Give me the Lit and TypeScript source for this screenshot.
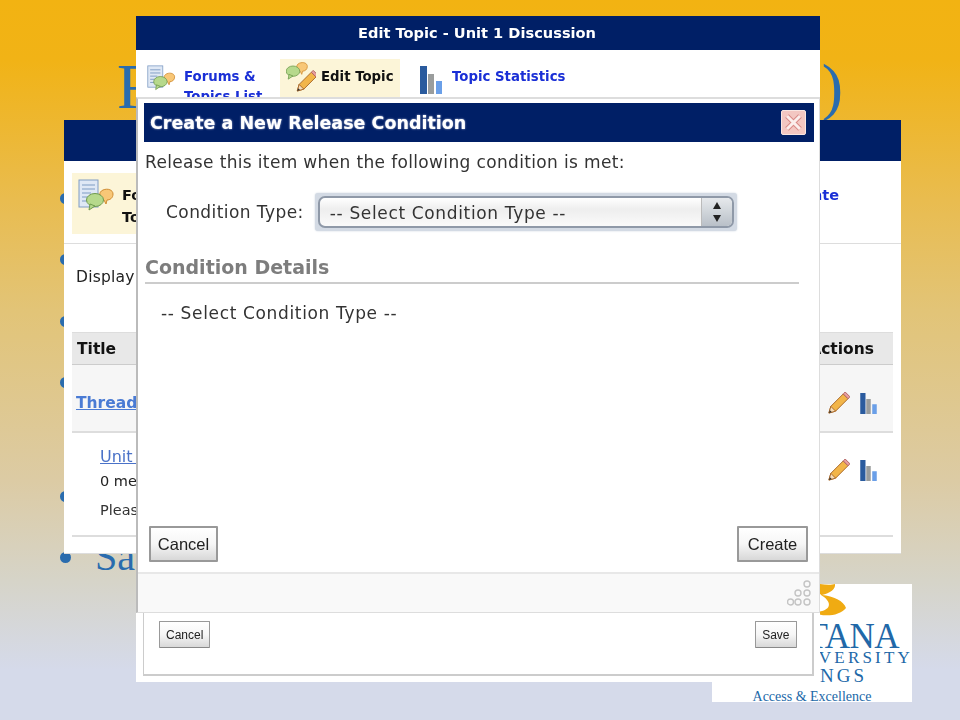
import { LitElement, html, css, svg } from "lit";
import { customElement } from "lit/decorators.js";

const listIcon = svg`<rect x="1" y="1" width="19" height="27" fill="#dfe8f5" stroke="#7f9cc4" stroke-width="1"/>
<path d="M4 6h13M4 10h13M4 14h9M4 18h7M4 22h6" stroke="#7f9cc4" stroke-width="1.2"/>`;
const bubbles = svg`<path d="M25 11c5-2 10 0 10 4s-3 6-6 6l-1 4-2-4c-5-1-6-8-1-10z" fill="#f8c777" stroke="#d08c32"/>
<ellipse cx="17" cy="21" rx="8.5" ry="6.5" fill="#b6d98c" stroke="#6f9a4d"/><path d="M12 25l-1 6 6-4z" fill="#b6d98c" stroke="#6f9a4d"/>`;
const pencil = svg`<path d="M3 22l2-7L18 2l5 5L10 20z" fill="#f2b549" stroke="#a8682a"/>
<path d="M18 2l2-2 5 5-2 2z" fill="#e8a0a0" stroke="#b06060"/><path d="M3 22l2-7 5 5z" fill="#f6dcb8" stroke="#a8682a"/><path d="M3 22l1-3 2 2z" fill="#333"/>`;

const listSvg = (w: number, h: number) => html`<svg class="ic" width=${w} height=${h} viewBox="0 0 38 34">${listIcon}${bubbles}</svg>`;
const editSvg = html`<svg class="ic" width="30" height="34" viewBox="0 0 32 34">
<g transform="translate(-7 -6) scale(.85)"><path d="M25 11c5-2 10 0 10 4s-3 6-6 6l-1 4-2-4c-5-1-6-8-1-10z" fill="#f8c777" stroke="#d08c32"/><ellipse cx="17" cy="21" rx="8.5" ry="6.5" fill="#b6d98c" stroke="#6f9a4d"/><path d="M12 25l-1 6 6-4z" fill="#b6d98c" stroke="#6f9a4d"/></g>
<g transform="translate(9 11)">${pencil}</g></svg>`;
const bars = (w: number, h: number) => html`<svg class="ic" width=${w} height=${h} viewBox="0 0 22 28">
<rect x="0" y="0" width="7" height="28" fill="#2a5b9e"/><rect x="8" y="8" width="6" height="20" fill="#9a9d9d"/><rect x="16" y="15" width="6" height="13" fill="#6a9fe8"/></svg>`;
const smallPencil = html`<svg class="ic" width="24" height="22" viewBox="0 0 25 23">${pencil}</svg>`;

@customElement("app-root")
export class AppRoot extends LitElement {
  static styles = css`
    :host { display: block; width: 960px; height: 720px; }
    .slide {
      position: relative; width: 960px; height: 720px; overflow: hidden;
      background: linear-gradient(180deg, #f2b312 0, #f1b316 60px, #e9bc4f 200px, #e2c477 310px, #dccba4 480px, #d6d4c8 580px, #d5daea 670px, #d5daea 720px);
      font-family: "DejaVu Sans", sans-serif; color: #222;
    }
    .title {
      position: absolute; left: 117px; top: 47px; width: 726px; display: flex; justify-content: space-between;
      font: 64px/80px "Liberation Serif", serif; color: #2a6cae;
    }
    .bullets {
      position: absolute; left: 60px; top: 167px; margin: 0; padding: 0; list-style: none;
      font: 40px/61.4px "Liberation Serif", serif; color: #2a6cae;
    }
    .bullets li { display: flex; height: 61.4px; }
    .bullets li.gap { margin-top: 52px; }
    .dot { width: 35px; font-size: 40px; }
    .dot::before { content: ""; display: inline-block; width: 11px; height: 11px; border-radius: 50%; background: #2a6cae; margin-bottom: 7px; }
    .logo {
      position: absolute; left: 712px; top: 584px; width: 200px; height: 118px; background: #fff;
      display: flex; flex-direction: column; align-items: flex-end;
      font-family: "Liberation Serif", serif; color: #2168a8;
    }
    .swoosh { position: absolute; left: 100px; top: 0; }
    .logo .a { font-size: 35px; line-height: 32px; margin-top: 37px; padding-right: 13px; letter-spacing: -.5px; }
    .logo .b { font-size: 17px; line-height: 20px; letter-spacing: 3.2px; margin-right: -1px; margin-top: -5px; }
    .logo .c { font-size: 19px; line-height: 20px; letter-spacing: 3px; padding-right: 45px; margin-top: -2px; }
    .logo .d { font-size: 14px; line-height: 16px; align-self: center; margin-top: 3px; }

    .win { position: absolute; background: #fff; overflow: hidden; filter: blur(.35px); }
    .back { left: 64px; top: 120px; width: 837px; height: 434px; display: flex; flex-direction: column; border-bottom: 1px solid #ddd; box-sizing: border-box; }
    .bar { background: #001f66; flex: none; }
    .back .bar { height: 41px; }
    .back .tools { height: 83px; flex: none; display: flex; justify-content: space-between; padding: 12px 8px 0; box-sizing: border-box; border-bottom: 1px solid #ddd; }
    .back .tab { display: flex; gap: 6px; width: 200px; height: 61px; background: #fcf5d8; padding: 6px; box-sizing: border-box; font: bold 14.5px/22px "DejaVu Sans", sans-serif; color: #111; }
    .back .tab span { margin-top: 5px; }
    .back .stat { font: bold 14.5px/22px "DejaVu Sans", sans-serif; color: #1a2fd6; margin: 11px 54px 0 0; }
    .display { height: 88px; flex: none; box-sizing: border-box; padding: 23px 12px 0; font-size: 15.5px; letter-spacing: .2px; line-height: 20px; color: #222; }
    .rows { margin: 0 8px; display: flex; flex-direction: column; }
    .row { display: flex; justify-content: space-between; align-items: center; box-sizing: border-box; padding: 0 5px; }
    .rhead { height: 33px; background: #e8e8e8; border-top: 1px solid #ddd; border-bottom: 1px solid #ccc; font: bold 15.5px "DejaVu Sans", sans-serif; color: #111; padding-right: 19px; }
    .r1 { height: 68px; background: #f6f6f6; border-bottom: 2px solid #ddd; padding: 10px 16px 0 4px; }
    .r1 a { font: bold 15.5px "DejaVu Sans", sans-serif; color: #4a7bd4; text-decoration: underline; }
    .r2 { height: 104px; border-bottom: 2px solid #ddd; align-items: flex-start; padding: 12px 16px 0 28px; font-size: 14.5px; line-height: 24px; }
    .r2 a { color: #4a72c8; text-decoration: underline; display: block; font-size: 16px; }
    .r2 p { margin: 0; }
    .r2 p + p { margin-top: 5px; color: #333; }
    .acts { display: flex; gap: 10px; align-items: center; }
    .r2 .acts { margin-top: 14px; }

    .front { left: 136px; top: 16px; width: 684px; height: 666px; display: flex; flex-direction: column; }
    .front .bar { height: 34px; display: flex; align-items: center; justify-content: center; padding: 0 2px 2px 0; box-sizing: border-box; font: bold 14.6px "DejaVu Sans", sans-serif; color: #fff; }
    .nav { flex: none; height: 47px; box-sizing: border-box; display: flex; align-items: flex-start; padding: 9px 0 0 11px; font: bold 13.3px/20px "DejaVu Sans", sans-serif; color: #1a2fd6; }
    .nav .it { display: flex; gap: 7px; }
    .nav .forums { width: 133px; }
    .nav .forums svg { margin-top: 6px; }
    .nav .forums span { margin-top: 8px; }
    .nav .cur { width: 120px; height: 38px; background: #fcf5d8; color: #111; gap: 5px; padding: 0 0 0 6px; box-sizing: border-box; }
    .nav .cur span { margin-top: 8px; }
    .nav .stats { margin-left: 20px; gap: 10px; }
    .nav .stats svg { margin-top: 7px; }
    .nav .stats span { margin-top: 8px; }

    .spacer { flex: none; height: 516px; }
    .frame { margin: 0 6px 6px 7px; height: 63px; border: solid #ccc; border-width: 0 2px 2px 1px; display: flex; justify-content: space-between; padding: 8px 15px 0; box-sizing: border-box; }
    .frame button { height: 27px; font-size: 12px; padding: 0 6px; }
    .frame button + button { padding: 0 6.5px; }
    button {
      font-family: "Liberation Sans", sans-serif; color: #222; border: 1px solid #999; border-bottom-color: #888; border-radius: 1px;
      background: linear-gradient(180deg, #fff 0, #f6f6f6 50%, #d8d8d8 100%);
    }

    .modal {
      position: absolute; left: 0; top: 81px; width: 684px; height: 516px; background: #fff; box-sizing: border-box;
      border-left: 2px solid #bbb; border-top: 2px solid #ddd; border-right: 1px solid #ddd; border-bottom: 1px solid #ddd;
      display: flex; flex-direction: column; padding-top: 4px;
    }
    .mhead {
      flex: none; height: 39px; margin: 0 5px 0 6px; background: #001f66; color: #fff; display: flex; align-items: center; justify-content: space-between;
      padding: 0 8px 0 6px; font: bold 17.5px "DejaVu Sans", sans-serif; text-shadow: 0 0 2px #c8d0e8;
    }
    .close { width: 25px; height: 25px; border-radius: 2px; background: #f3c7c2; border: 1px solid #f9e6e2; box-sizing: border-box; display: flex; align-items: center; justify-content: center; }
    .mbody { flex: 1; padding: 10px 7px 0; display: flex; flex-direction: column; font-size: 17px; color: #333; }
    .mbody p { margin: 0; line-height: 20px; letter-spacing: .35px; }
    .ctype { display: flex; align-items: center; gap: 11px; margin: 20px 0 0 21px; height: 40px; letter-spacing: .43px; }
    .select {
      width: 422px; height: 38px; box-sizing: border-box; padding: 3px; background: #d3dae4; border-radius: 3px; display: flex; box-shadow: 0 0 2px #c9d2de;
    }
    .select .in {
      flex: 1; display: flex; justify-content: space-between; border: 2px solid #8f99a8; border-radius: 7px; overflow: hidden;
      background: linear-gradient(180deg, #fff 0, #eee 40%, #fafafa 100%);
    }
    .select .v { padding-left: 10px; line-height: 30px; font-size: 17px; letter-spacing: .65px; color: #333; }
    .select .st { width: 30px; background: linear-gradient(180deg, #e6e9ec, #b9c0c8); border-left: 1px solid #bbb; display: flex; flex-direction: column; align-items: center; justify-content: center; gap: 6px; }
    .mbody h3 { margin: 23px 13px 0 0; font: bold 19px/24px "DejaVu Sans", sans-serif; color: #7d7d7d; border-bottom: 2px solid #ccc; padding-bottom: 3px; }
    .mbody .sel { margin: 19px 0 0 16px; letter-spacing: .65px; }
    .bts { margin-top: auto; display: flex; justify-content: space-between; padding: 0 4px 10px 4px; }
    .bts button { width: 69px; height: 36px; font-size: 16.5px; padding: 0; border-width: 2px; border-color: #999; }
    .bts button.cr { width: 71px; }
    .mfoot { flex: none; height: 40px; background: #f9f9f9; border-top: 2px solid #e8e8e8; box-sizing: border-box; display: flex; justify-content: flex-end; align-items: center; padding-right: 6px; }
  `;

  render() {
    return html`<div class="slide">
      <div class="title"><span>Release Conditions</span><span>)</span></div>
      <ul class="bullets">
        <li><span class="dot"></span></li><li><span class="dot"></span></li><li><span class="dot"></span></li><li><span class="dot"></span></li>
        <li class="gap"><span class="dot"></span></li><li><span class="dot"></span><span>Save</span></li>
      </ul>

      <div class="logo">
        <svg class="swoosh" width="40" height="34" viewBox="0 0 40 34"><path d="M8 0c6 1 12 1 15 0 1 5-5 9-13 11 11 1 22 6 24 13-7 9-25 9-33 4 17 0 20-8 11-15C5 9 5 4 8 0z" fill="#f0ab12"/></svg>
        <div class="a">MONTANA</div><div class="b">UNIVERSITY</div><div class="c">BILLINGS</div><div class="d">Access &amp; Excellence</div>
      </div>

      <div class="win back">
        <div class="bar"></div>
        <div class="tools">
          <div class="tab">${listSvg(38, 34)}<span>Forums &amp;<br>Topics List</span></div>
          <div class="stat">Create</div>
        </div>
        <div class="display">Display Options</div>
        <div class="rows">
          <div class="row rhead"><span>Title</span><span>Actions</span></div>
          <div class="row r1"><a>Threads</a><span class="acts">${smallPencil}${bars(17, 21)}</span></div>
          <div class="row r2"><div><a>Unit 1 Discussion</a><p>0 messages</p><p>Please discuss</p></div><span class="acts">${smallPencil}${bars(17, 21)}</span></div>
        </div>
      </div>

      <div class="win front">
        <div class="bar">Edit Topic - Unit 1 Discussion</div>
        <div class="nav">
          <div class="it forums">${listSvg(30, 27)}<span>Forums &amp;<br>Topics List</span></div>
          <div class="it cur">${editSvg}<span>Edit Topic</span></div>
          <div class="it stats">${bars(22, 28)}<span>Topic Statistics</span></div>
        </div>
        <div class="spacer"></div>
        <div class="frame"><button>Cancel</button><button>Save</button></div>
        <div class="modal">
          <div class="mhead"><span>Create a New Release Condition</span>
            <span class="close"><svg width="21" height="21" viewBox="0 0 21 21"><path d="M4 4l13 13M17 4L4 17" stroke="#d98a86" stroke-width="5"/><path d="M4 4l13 13M17 4L4 17" stroke="#fbeeec" stroke-width="3"/></svg></span>
          </div>
          <div class="mbody">
            <p>Release this item when the following condition is met:</p>
            <div class="ctype"><span>Condition Type:</span>
              <div class="select"><div class="in"><span class="v">-- Select Condition Type --</span>
                <span class="st"><svg width="10" height="7" viewBox="0 0 10 7"><path d="M5 0l4 7H1z" fill="#222"/></svg><svg width="10" height="7" viewBox="0 0 10 7"><path d="M1 0h8L5 7z" fill="#222"/></svg></span></div></div>
            </div>
            <h3>Condition Details</h3>
            <div class="sel">-- Select Condition Type --</div>
            <div class="bts"><button>Cancel</button><button class="cr">Create</button></div>
          </div>
          <div class="mfoot"><svg width="26" height="26" viewBox="0 0 26 26" fill="none" stroke="#c4c4c4" stroke-width="1.4"><circle cx="20" cy="4" r="3"/><circle cx="20" cy="13" r="3"/><circle cx="11" cy="13" r="3"/><circle cx="20" cy="22" r="3"/><circle cx="11" cy="22" r="3"/><circle cx="3.5" cy="22" r="3"/></svg></div>
        </div>
      </div>
    </div>`;
  }
}
